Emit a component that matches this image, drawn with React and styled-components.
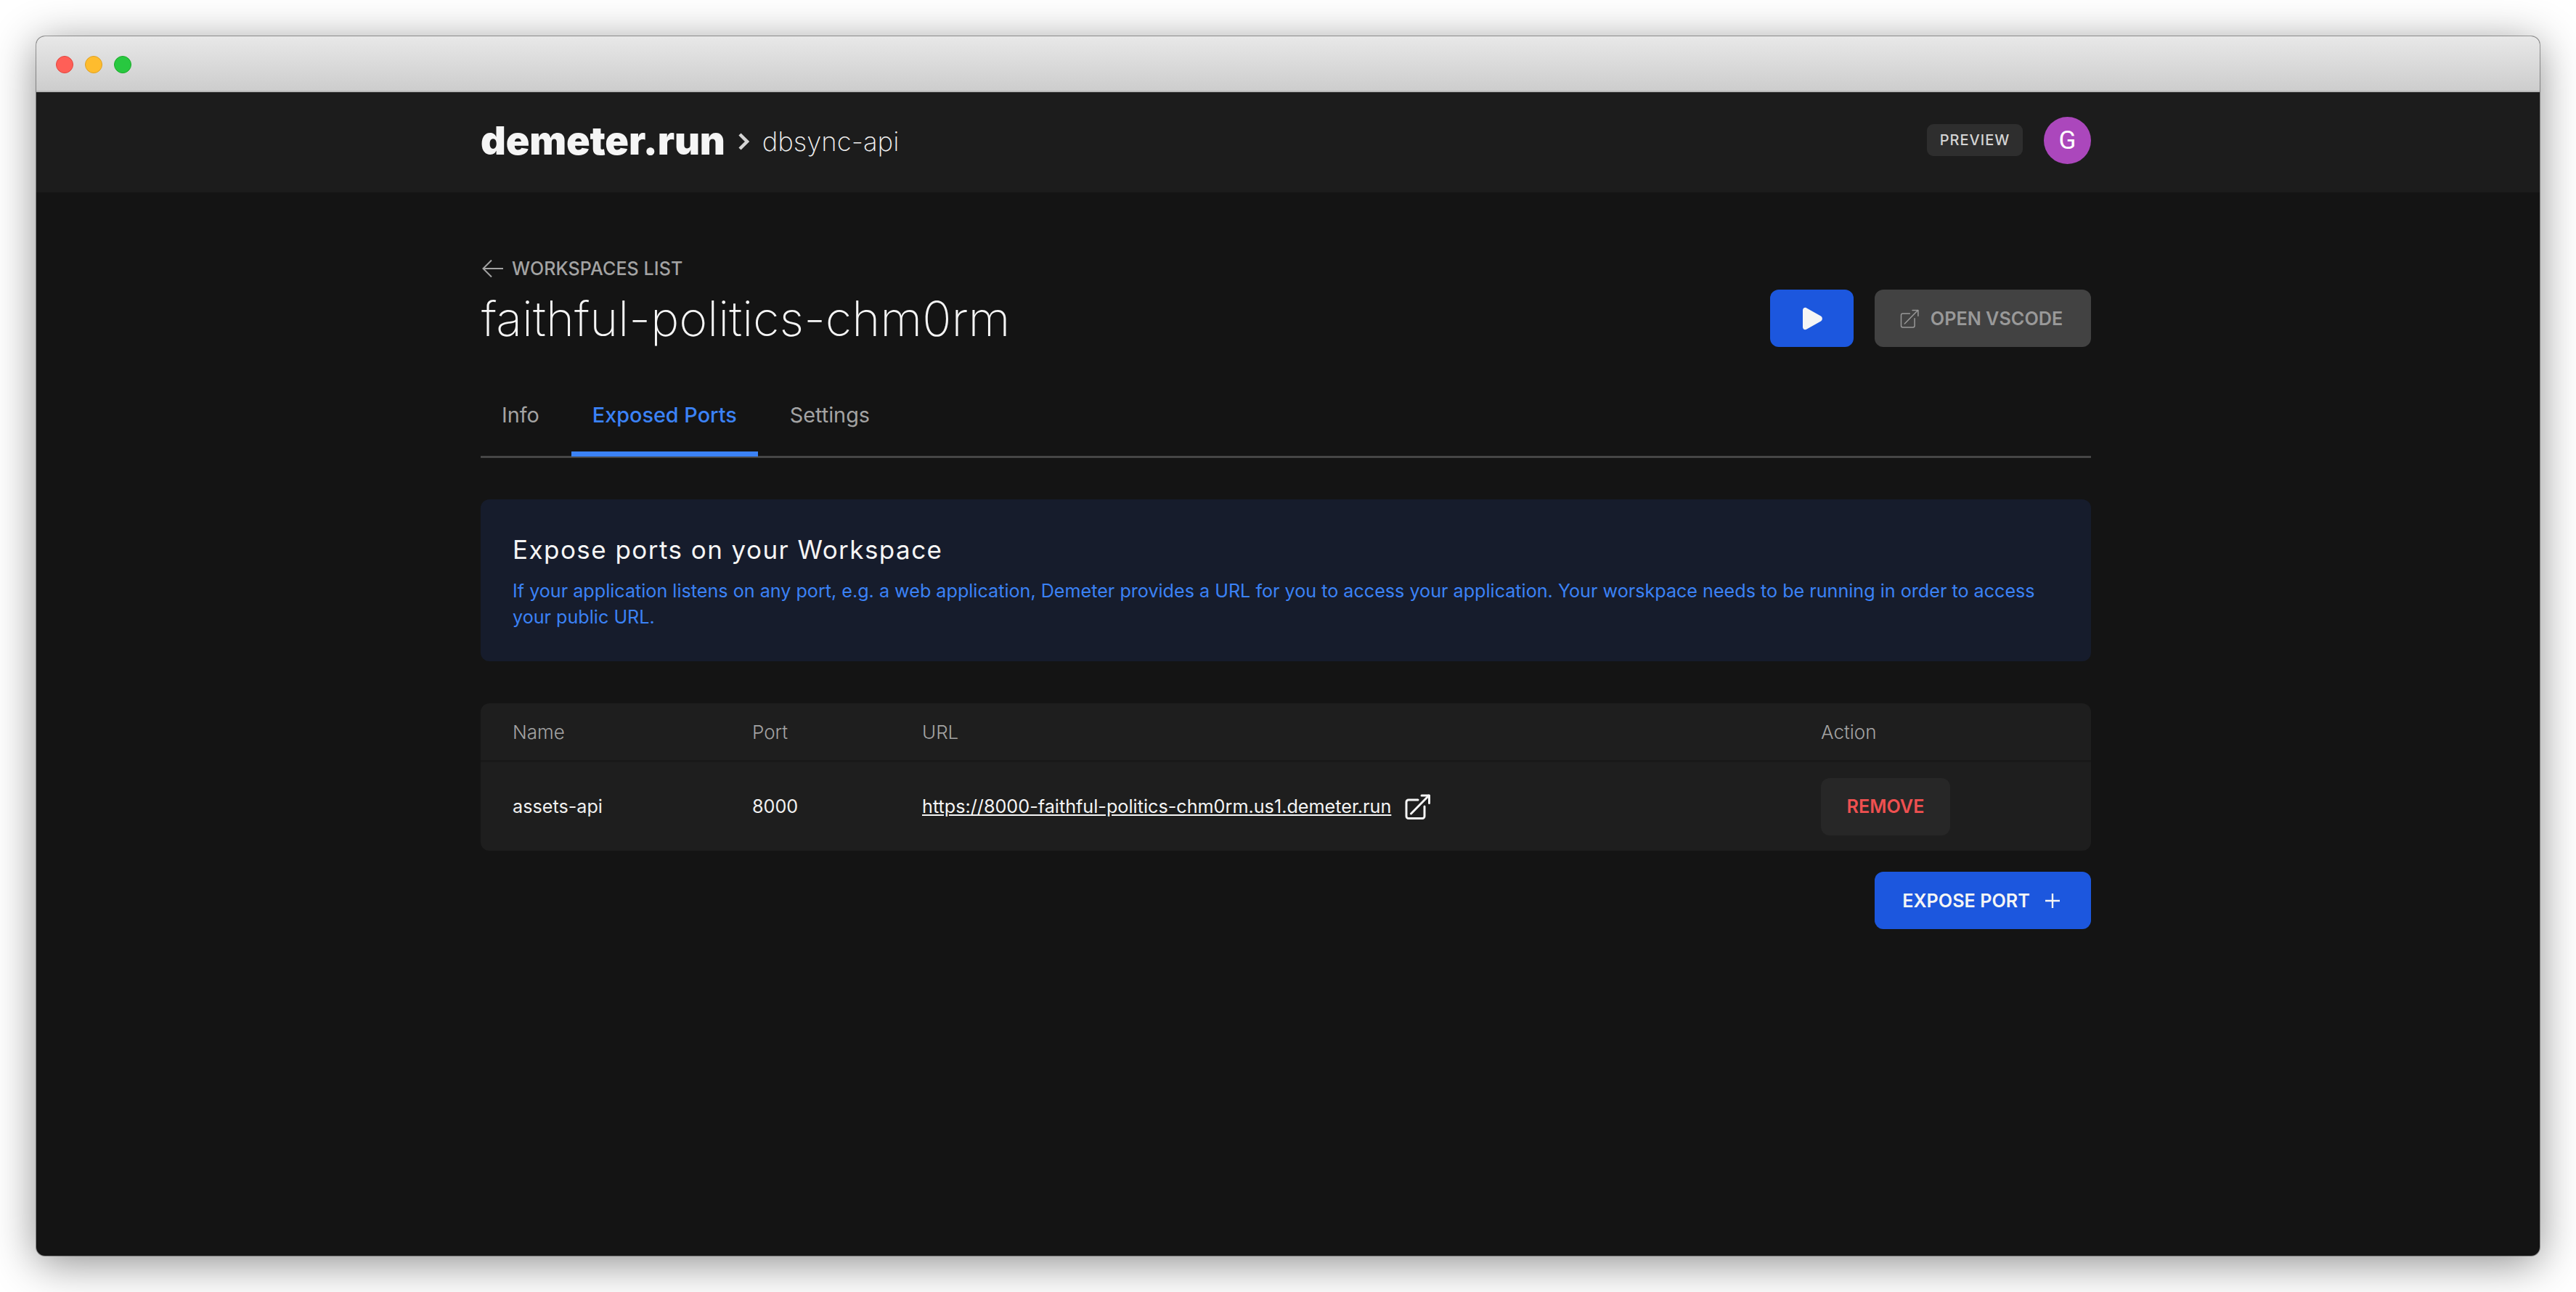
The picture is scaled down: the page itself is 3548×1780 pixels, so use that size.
import React from 'react';
import styled, { createGlobalStyle } from 'styled-components';

const Global = createGlobalStyle`
  html, body { margin: 0; background: #fff; }
  * { box-sizing: border-box; }
  body { font-family: 'Inter', 'Liberation Sans', sans-serif; }
`;

function ExternalIcon({ size, weight }) {
  return (
    <svg width={size} height={size} viewBox="0 0 35 35" fill="none" stroke="currentColor" strokeWidth={weight} strokeLinecap="round" strokeLinejoin="round">
      <path d="M27 17v13.5a3 3 0 0 1-3 3H5a3 3 0 0 1-3-3V11a3 3 0 0 1 3-3h13" />
      <path d="M8.5 27L33 2" />
      <path d="M23 2h10.5v10.5" />
    </svg>
  );
}

function App() {
  return (
    <Page>
      <Global />
      <Window>
        <TitleBar>
          <Dot color="#ff5f57" edge="#e2463f" />
          <Dot color="#febc2e" edge="#dea123" />
          <Dot color="#28c840" edge="#1aab29" />
        </TitleBar>
        <Header>
          <HeaderInner>
            <Brand>
              <Logo>demeter.run</Logo>
              <Chevron width="16" height="24" viewBox="0 0 16 24" fill="none" stroke="#d4d4d4" strokeWidth="4.5">
                <path d="M3 2l10 10L3 22" />
              </Chevron>
              <Project>dbsync-api</Project>
            </Brand>
            <HeaderRight>
              <PreviewBadge>PREVIEW</PreviewBadge>
              <Avatar>G</Avatar>
            </HeaderRight>
          </HeaderInner>
        </Header>
        <Content>
          <BackLink>
            <svg width="30" height="26" viewBox="0 0 30 26" fill="none" stroke="#a3a3a3" strokeWidth="2">
              <path d="M29 13H2" />
              <path d="M13 1.5L1.5 13 13 24.5" />
            </svg>
            <span>WORKSPACES LIST</span>
          </BackLink>
          <TitleRow>
            <PageTitle>faithful-politics-chm0rm</PageTitle>
            <Actions>
              <PlayButton>
                <svg width="30" height="32" viewBox="0 0 30 32" fill="#f5f5f5">
                  <path d="M2 4.5C2 1.6 4.6 0 7 1.3l20 11.2c2.5 1.4 2.5 5.6 0 7L7 30.7C4.6 32 2 30.400 2 27.500z" />
                </svg>
              </PlayButton>
              <VscodeButton>
                <ExternalIcon size={26} weight={2} />
                OPEN VSCODE
              </VscodeButton>
            </Actions>
          </TitleRow>
          <TabBar>
            <Tab>Info</Tab>
            <Tab active>Exposed Ports</Tab>
            <Tab>Settings</Tab>
          </TabBar>
          <InfoCard>
            <InfoTitle>Expose ports on your Workspace</InfoTitle>
            <InfoText>
              If your application listens on any port, e.g. a web application, Demeter provides a URL for you to access your application. Your worskpace needs to be running in order to access your public URL.
            </InfoText>
          </InfoCard>
          <PortTable>
            <HeadRow>
              <span>Name</span>
              <span>Port</span>
              <span>URL</span>
              <span>Action</span>
            </HeadRow>
            <BodyRow>
              <span>assets-api</span>
              <span>8000</span>
              <UrlCell>
                <UrlLink href="#">https://8000-faithful-politics-chm0rm.us1.demeter.run</UrlLink>
                <ExternalIcon size={35} weight={3} />
              </UrlCell>
              <span>
                <RemoveButton>REMOVE</RemoveButton>
              </span>
            </BodyRow>
          </PortTable>
          <TableFooter>
            <ExposeButton>
              EXPOSE PORT
              <svg width="20" height="20" viewBox="0 0 20 20" stroke="#f5f5f5" strokeWidth="2.400">
                <path d="M10 0v20M0 10h20" />
              </svg>
            </ExposeButton>
          </TableFooter>
        </Content>
      </Window>
    </Page>
  );
}

export default App;

const Page = styled.div`
  width: 3548px;
  height: 1780px;
  padding: 50px;
  overflow: hidden;
  background: #fff;
`;
const Window = styled.div`
  width: 3448px;
  height: 1680px;
  border-radius: 12px;
  overflow: hidden;
  background: #141414;
  box-shadow: 0 0 0 1px rgba(0, 0, 0, 0.35), 0 10px 60px rgba(0, 0, 0, 0.45);
  display: flex;
  flex-direction: column;
`;
const TitleBar = styled.div`
  height: 77px;
  flex: none;
  display: flex;
  align-items: center;
  gap: 16px;
  padding: 3px 27px 0;
  background: linear-gradient(#e8e8e8, #cdcdcd);
  border-bottom: 2px solid #b6b6b6;
`;
const Dot = styled.span`
  width: 24px;
  height: 24px;
  border-radius: 50%;
  background: ${(p) => p.color};
  border: 1px solid ${(p) => p.edge};
`;
const Header = styled.header`
  height: 138px;
  flex: none;
  padding-bottom: 6px;
  background: #1c1c1c;
`;
const HeaderInner = styled.div`
  width: 2218px;
  height: 100%;
  margin-left: 612px;
  display: flex;
  align-items: center;
  justify-content: space-between;
`;
const Brand = styled.div`
  display: flex;
  align-items: center;
`;
const Logo = styled.div`
  font-size: 54px;
  font-weight: 900;
  color: #f5f5f5;
  letter-spacing: -0.2px;
`;
const Chevron = styled.svg`
  margin: 4px 18px 0 17px;
`;
const Project = styled.div`
  font-size: 36.5px;
  font-weight: 200;
  color: #f0f0f0;
  margin-top: 4px;
`;
const HeaderRight = styled.div`
  display: flex;
  align-items: center;
  gap: 29px;
`;
const PreviewBadge = styled.div`
  width: 132px;
  height: 44px;
  display: flex;
  align-items: center;
  justify-content: center;
  border-radius: 9px;
  background: #2e2e2e;
  color: #d4d4d4;
  font-size: 20px;
  font-weight: 500;
  letter-spacing: 1px;
`;
const Avatar = styled.div`
  width: 65px;
  height: 65px;
  border-radius: 50%;
  background: #ab47bc;
  color: #fff;
  display: flex;
  align-items: center;
  justify-content: center;
  font-family: 'Roboto', sans-serif;
  font-size: 35px;
`;
const Content = styled.main`
  width: 2218px;
  margin-left: 612px;
  padding-top: 90px;
`;
const BackLink = styled.a`
  height: 30px;
  display: flex;
  align-items: center;
  gap: 11px;
  color: #a3a3a3;
  font-size: 25px;
  font-weight: 500;
  letter-spacing: 0.1px;
  padding-left: 2px;
`;
const TitleRow = styled.div`
  margin-top: 14px;
  display: flex;
  align-items: center;
  justify-content: space-between;
`;
const PageTitle = styled.h1`
  margin: 0;
  padding-left: 1px;
  font-size: 66.6px;
  line-height: 79px;
  font-weight: 200;
  color: #f5f5f5;
`;
const Actions = styled.div`
  display: flex;
  gap: 29px;
`;
const Button = styled.button`
  height: 79px;
  border: 0;
  border-radius: 12px;
  display: inline-flex;
  align-items: center;
  justify-content: center;
  font-family: inherit;
  font-size: 25.2px;
  font-weight: 600;
`;
const PlayButton = styled(Button)`
  width: 115px;
  background: #1c57de;
`;
const VscodeButton = styled(Button)`
  width: 298px;
  gap: 16px;
  padding-left: 2px;
  background: #424242;
  color: #999;
`;
const TabBar = styled.nav`
  margin-top: 46px;
  display: flex;
  gap: 15px;
  border-bottom: 3px solid #464646;
`;
const Tab = styled.div`
  padding: 24px 29px 26px;
  margin-bottom: -1px;
  font-size: 28.8px;
  line-height: 48px;
  color: ${(p) => (p.active ? '#3b82f6' : '#a3a3a3')};
  font-weight: ${(p) => (p.active ? 500 : 400)};
  border-bottom: 7px solid ${(p) => (p.active ? '#3b82f6' : 'transparent')};
`;
const InfoCard = styled.section`
  margin-top: 57px;
  padding: 44px 44px 43px;
  height: 223px;
  border-radius: 12px;
  background: #161c2c;
`;
const InfoTitle = styled.h2`
  margin: 0;
  font-size: 35px;
  line-height: 50px;
  font-weight: 400;
  color: #f5f5f5;
  letter-spacing: 1.45px;
`;
const InfoText = styled.p`
  margin: 14px 0 0;
  font-size: 25.15px;
  line-height: 36px;
  color: #3b82f6;
`;
const PortTable = styled.div`
  margin-top: 58px;
  border-radius: 12px;
  overflow: hidden;
  background: #1e1e1e;
`;
const Row = styled.div`
  display: grid;
  grid-template-columns: 330px 234px 1238px 1fr;
  align-items: center;
  padding-left: 44px;
`;
const HeadRow = styled(Row)`
  height: 81px;
  border-bottom: 3px solid #191919;
  color: #a3a3a3;
  font-size: 26px;
  font-weight: 300;
`;
const BodyRow = styled(Row)`
  height: 122px;
  color: #f0f0f0;
  font-size: 25.2px;
`;
const UrlCell = styled.span`
  display: flex;
  align-items: center;
  gap: 19px;
  color: #f5f5f5;
`;
const UrlLink = styled.a`
  color: #f5f5f5;
  text-decoration: underline;
`;
const RemoveButton = styled(Button)`
  width: 178px;
  background: #272727;
  color: #ef5050;
`;
const TableFooter = styled.div`
  margin-top: 29px;
  display: flex;
  justify-content: flex-end;
`;
const ExposeButton = styled(Button)`
  width: 298px;
  gap: 21px;
  padding-right: 11px;
  background: #1c57de;
  color: #f5f5f5;
`;
